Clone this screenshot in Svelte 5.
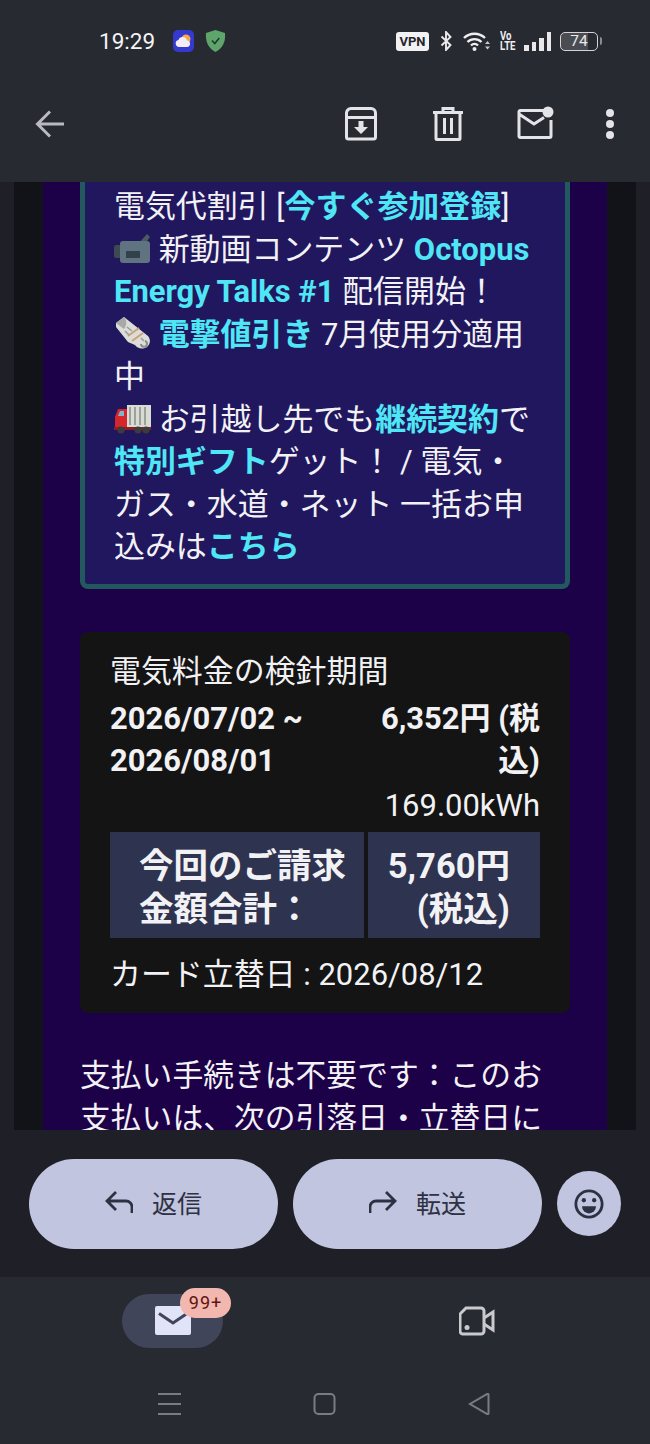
<script>
	const billRows = ['今回のご請求', '金額合計：'];
</script>

<div class="phone">
	<header class="top">
		<div class="status">
			<span class="time">19:29</span>
			<svg class="weather" viewBox="0 0 21 22">
				<rect width="21" height="22" rx="5" fill="#3539d0" />
				<circle cx="13" cy="9" r="4.500" fill="#f4a94e" />
				<path d="M6 17a3.500 3.500 0 0 1-.6-6.900A4.500 4.500 0 0 1 14 10.500a3.300 3.300 0 0 1 .5 6.500z" fill="#f1ecf6" />
			</svg>
			<svg class="shield" viewBox="0 0 21 22">
				<path d="M10.500 0 20 3c.8 9-2.500 15.500-9.500 19C3.500 18.500.2 12 1 3z" fill="#5ea56c" />
				<path d="m7 10.500 2.800 3 4.500-5.500" fill="none" stroke="#1f3a28" stroke-width="1.500" />
			</svg>
			<span class="spacer"></span>
			<span class="vpn">VPN</span>
			<svg class="bt" viewBox="0 0 14 20">
				<path d="M2 5.500 11 14l-4.500 5V1L11 6l-9 8.500" fill="none" stroke="#e9e9ec" stroke-width="1.900" />
			</svg>
			<svg class="wifi" viewBox="0 0 28 20">
				<path d="M1 7a15 15 0 0 1 21 0M4.500 11a10 10 0 0 1 14 0M8 14.500a5 5 0 0 1 7 0" fill="none" stroke="#eeeef0" stroke-width="2.400" />
				<circle cx="11.500" cy="18" r="2" fill="#eeeef0" />
				<path d="m22 13 2.500-3 2.500 3zM22 15.500l2.500 3 2.500-3z" fill="#c9c9cd" />
			</svg>
			<span class="volte"><b>Vo</b><b>LTE</b></span>
			<span class="signal"><i></i><i></i><i></i><i></i></span>
			<span class="battery"><span>74</span></span>
		</div>
		<div class="toolbar">
			<svg class="back" viewBox="0 0 30 28">
				<path d="M29 14H3M15 1.500 2.500 14 15 26.500" fill="none" stroke="#b9b9bf" stroke-width="3" />
			</svg>
			<span class="spacer"></span>
			<svg class="archive" viewBox="0 0 34 34">
				<path d="M2.500 10.500V30a2 2 0 0 0 2 2h25a2 2 0 0 0 2-2V10.500M2.500 10.500V6a4.500 4.500 0 0 1 4.500-4.500h20A4.500 4.500 0 0 1 31.500 6v4.500z" fill="none" stroke="#e3e3e8" stroke-width="3" />
				<path d="M14.500 14h5v6h4.500L17 27l-7-7h4.500z" fill="#e3e3e8" />
			</svg>
			<svg class="trash" viewBox="0 0 30 34">
				<path d="M0 5.500h30M10 5V1.500h10V5M3 6v25.500a1 1 0 0 0 1 1h22a1 1 0 0 0 1-1V6M11.500 11v16M18.500 11v16" fill="none" stroke="#e3e3e8" stroke-width="3" />
			</svg>
			<svg class="unread" viewBox="0 0 37 33">
				<path d="M27 4.500H3.500A1.500 1.500 0 0 0 2 6v24a1.500 1.500 0 0 0 1.500 1.500h29A1.500 1.500 0 0 0 34 30V14M2 8l15 10 10-6.500" fill="none" stroke="#e3e3e8" stroke-width="3" />
				<circle cx="31" cy="6" r="5.500" fill="#e3e3e8" />
			</svg>
			<span class="dots"><i></i><i></i><i></i></span>
		</div>
	</header>

	<main class="mail">
		<div class="gutter">
			<div class="sheet">
				<section class="notice">
					電気代割引 [<a href="#top">今すぐ参加登録</a>]<br />
					<svg class="emoji" viewBox="0 0 37 32">
						<path d="M24 12 33 2l3 3-6 8z" fill="#4d5a60" />
						<rect x="0" y="13" width="8" height="13" rx="2" fill="#3d4a50" />
						<rect x="6" y="9" width="30" height="22" rx="3" fill="#5f7480" />
						<rect x="12" y="19" width="14" height="7" fill="#33424a" />
					</svg>
					新動画コンテンツ <a href="#top">Octopus Energy Talks #1</a> 配信開始！<br />
					<svg class="emoji" viewBox="0 0 37 32">
						<path d="M2 6 10 0l24 19a7.500 7.500 0 0 1-3 12c-4 1.500-8 0-10-3L14 25 2 10z" fill="#dcdcd8" />
						<path d="M10 0c3 3 3 8 0 12L2 6z" fill="#a9a9a6" />
						<path d="m14 19 11-8M18 24l11-8" stroke="#c9a27c" stroke-width="2" />
						<path d="M13 10l5 4M11 14l4 4M27 21l3 3" stroke="#9b9b98" stroke-width="1.500" />
						<path d="M31 24a3 3 0 1 1-4 3" fill="none" stroke="#8d8d8a" stroke-width="2" />
					</svg>
					<a href="#top">電撃値引き</a> 7月使用分適用中<br />
					<svg class="emoji" viewBox="0 0 37 32">
						<rect x="13" y="3" width="24" height="22" fill="#d9dbd5" />
						<path d="M16 5v18M21 5v18M26 5v18M31 5v18" stroke="#9aa29a" stroke-width="2" />
						<path d="M1 15 4 7h9v19H1z" fill="#d7262b" />
						<path d="M4 14 6 9h4v5z" fill="#7fb4d0" />
						<rect x="0" y="25" width="37" height="3" fill="#8b1f22" />
						<circle cx="7" cy="28" r="3.500" fill="#3c3c3c" />
						<circle cx="24" cy="28" r="3.500" fill="#3c3c3c" />
						<circle cx="32" cy="28" r="3.500" fill="#3c3c3c" />
					</svg>
					お引越し先でも<a href="#top">継続契約</a>で<a href="#top">特別ギフト</a>ゲット！ / 電気・ガス・水道・ネット 一括お申込みは<a href="#top">こちら</a>
				</section>

				<section class="bill">
					<p class="label">電気料金の検針期間</p>
					<div class="period">
						<strong class="dates">2026/07/02 ~<br />2026/08/01</strong>
						<strong class="price">6,352円 (税込)</strong>
					</div>
					<p class="usage">169.00kWh</p>
					<div class="total">
						<div class="total-label">
							{#each billRows as row}<div>{row}</div>{/each}
						</div>
						<div class="total-amount">5,760円<br />(税込)</div>
					</div>
					<p class="card-date">カード立替日 : 2026/08/12</p>
				</section>

				<p class="after">支払い手続きは不要です：このお支払いは、次の引落日・立替日に</p>
			</div>
		</div>
	</main>

	<section class="actions">
		<button class="pill">
			<svg viewBox="0 0 28 24"><path d="M27 23v-6a6 6 0 0 0-6-6H3M11 2 2 11l9 9" fill="none" stroke="#2e3142" stroke-width="2.800" /></svg>
			返信
		</button>
		<button class="pill">
			<svg viewBox="0 0 28 24"><path d="M1 23v-6a6 6 0 0 1 6-6h18M17 2l9 9-9 9" fill="none" stroke="#2e3142" stroke-width="2.800" /></svg>
			転送
		</button>
		<button class="smile" aria-label="リアクション">
			<svg viewBox="0 0 32 32">
				<circle cx="16" cy="16" r="14" fill="none" stroke="#2e3142" stroke-width="3" />
				<circle cx="10.500" cy="12" r="2.300" fill="#2e3142" />
				<circle cx="21.500" cy="12" r="2.300" fill="#2e3142" />
				<path d="M8.500 18.500h15a7.500 7.500 0 0 1-15 0z" fill="#2e3142" />
			</svg>
		</button>
	</section>

	<nav class="tabs">
		<div class="tab">
			<div class="tab-active">
				<svg class="tab-mail" viewBox="0 0 36 30">
					<rect width="36" height="29" rx="2" fill="#e1e3f8" />
					<path d="M4 7.500 18 17 32 7.500" fill="none" stroke="#40455a" stroke-width="3" />
				</svg>
				<span class="badge">99+</span>
			</div>
		</div>
		<div class="tab">
			<svg class="tab-video" viewBox="0 0 36 30">
				<path d="M7 2h15a3 3 0 0 1 3 3v20a3 3 0 0 1-3 3H4a3 3 0 0 1-3-3V8z" fill="none" stroke="#c9c9ce" stroke-width="3" />
				<path d="m25 12 9-6v18l-9-6" fill="none" stroke="#c9c9ce" stroke-width="3" />
				<circle cx="8" cy="21.500" r="2.500" fill="#c9c9ce" />
			</svg>
		</div>
	</nav>

	<footer class="sysnav">
		<svg class="menu" viewBox="0 0 23 22"><path d="M0 1h23M0 11h23M0 21h23" stroke="#7b7c82" stroke-width="2" /></svg>
		<svg class="home" viewBox="0 0 22 22"><rect x="1" y="1" width="20" height="20" rx="4" fill="none" stroke="#7b7c82" stroke-width="2" /></svg>
		<svg class="tri" viewBox="0 0 22 22"><path d="M20 1.500v19a.8.8 0 0 1-1.200.6L1.500 11 18.800.9a.8.8 0 0 1 1.200.6z" fill="none" stroke="#7b7c82" stroke-width="2" /></svg>
	</footer>
</div>

<style>
	:global(body) {
		margin: 0;
		background: #282a31;
	}
	.phone {
		width: 650px;
		height: 1444px;
		display: flex;
		flex-direction: column;
		overflow: hidden;
		background: #282a31;
		font-family: Roboto, 'Noto Sans CJK JP', sans-serif;
		color: #fff;
	}
	svg {
		display: block;
		flex: none;
	}
	.spacer {
		flex: 1;
	}

	/* status bar + toolbar */
	.top {
		height: 182px;
		flex: none;
	}
	.status {
		height: 82px;
		display: flex;
		align-items: center;
		padding: 0 52px 0 99px;
		box-sizing: border-box;
	}
	.time {
		font-size: 22.500px;
		color: #f4f4f6;
		width: 74px;
	}
	.weather {
		width: 21px;
		height: 22px;
		margin-right: 11px;
	}
	.shield {
		width: 21px;
		height: 22px;
	}
	.vpn {
		width: 33px;
		height: 19px;
		border-radius: 3px;
		background: #f2f2f4;
		color: #24262c;
		font-size: 13px;
		font-weight: 700;
		line-height: 19px;
		text-align: center;
		margin-right: 10px;
	}
	.bt {
		width: 15px;
		height: 20px;
		margin-right: 9px;
	}
	.wifi {
		width: 28px;
		height: 20px;
		margin-right: 9px;
	}
	.volte {
		width: 15px;
		display: flex;
		flex-direction: column;
		margin-right: 9px;
	}
	.volte b {
		font-size: 12px;
		line-height: 10.500px;
		color: #eeeef0;
		transform: scaleX(0.8);
		transform-origin: left;
		white-space: nowrap;
	}
	.signal {
		display: flex;
		align-items: flex-end;
		gap: 3px;
		height: 19px;
		margin-right: 9px;
	}
	.signal i {
		width: 4.500px;
		background: #e8e8ea;
		height: 6px;
	}
	.signal i:nth-child(2) {
		height: 9px;
	}
	.signal i:nth-child(3) {
		height: 13px;
	}
	.signal i:nth-child(4) {
		height: 19px;
	}
	.battery {
		width: 38px;
		height: 19px;
		box-sizing: border-box;
		border: 1.500px solid #d4d4d8;
		border-radius: 5px;
		background: linear-gradient(90deg, #4a4c52 74%, transparent 74%);
		font-size: 15.500px;
		line-height: 16px;
		text-align: center;
		color: #e8e8ea;
		position: relative;
	}
	.battery::after {
		content: '';
		position: absolute;
		right: -5px;
		top: 4px;
		width: 2px;
		height: 8px;
		border-radius: 0 2px 2px 0;
		background: #8b8c90;
	}
	.toolbar {
		height: 84px;
		display: flex;
		align-items: center;
		padding: 0 36px 0 35px;
	}
	.back {
		width: 30px;
		height: 28px;
	}
	.archive {
		width: 34px;
		height: 34px;
		margin-right: 55px;
		margin-left: -1px;
	}
	.trash {
		width: 30px;
		height: 34px;
		margin-right: 54px;
	}
	.unread {
		width: 37px;
		height: 33px;
		margin-top: -3px;
		margin-right: 52px;
	}
	.dots {
		width: 8px;
		display: flex;
		flex-direction: column;
		gap: 3px;
	}
	.dots i {
		width: 8px;
		height: 8px;
		border-radius: 50%;
		background: #e3e3e8;
	}

	/* mail body, scrolled part way */
	.mail {
		height: 948px;
		flex: none;
		padding: 0 14px;
		background: #1f2027;
		overflow: hidden;
	}
	.gutter {
		height: 100%;
		padding: 0 29px;
		background: #121318;
	}
	.sheet {
		height: 100%;
		background: #1c0048;
		padding: 0 37px;
		overflow: hidden;
	}
	.notice {
		background: #21175e;
		border: 5px solid #22595f;
		border-top: 0;
		border-radius: 0 0 8px 8px;
		padding: 4px 29px 15px;
		font-size: 30.950px;
		line-height: 42.500px;
		color: #f2f2f5;
	}
	.notice a {
		color: #4fe6f5;
		font-weight: 700;
		text-decoration: none;
	}
	.emoji {
		display: inline-block;
		width: 37px;
		height: 32px;
		vertical-align: -4px;
	}
	.bill {
		margin-top: 43px;
		background: #141414;
		border-radius: 8px;
		padding: 19px 30px 17px;
		font-size: 30.950px;
		line-height: 42px;
		color: #f2f2f5;
	}
	.bill p {
		margin: 0;
	}
	.period {
		display: grid;
		grid-template-columns: 1fr 165px;
		margin-top: 5px;
	}
	.dates,
	.price {
		font-weight: 700;
	}
	.price,
	.usage {
		text-align: right;
	}
	.bill .usage {
		margin-top: 3px;
	}
	.total {
		display: grid;
		grid-template-columns: 254px 172px;
		gap: 4px;
		height: 106px;
		font-size: 34.500px;
		font-weight: 700;
		line-height: 43px;
		margin: 5px 0 16px;
	}
	.total-label,
	.total-amount {
		background: #2e3350;
		padding-top: 13px;
	}
	.total-label {
		padding-left: 29px;
	}
	.total-amount {
		text-align: right;
		padding-right: 30px;
	}
	.sheet .after {
		margin: 41px 0 0;
		font-size: 30.800px;
		line-height: 43px;
		color: #f2f2f5;
	}

	/* reply actions */
	.actions {
		height: 147px;
		flex: none;
		background: #1f2027;
		display: flex;
		align-items: center;
		gap: 15px;
		padding: 0 29px;
		box-sizing: border-box;
	}
	.pill {
		width: 249px;
		height: 90px;
		border: 0;
		border-radius: 45px;
		background: #c1c5e0;
		color: #2e3142;
		display: flex;
		align-items: center;
		justify-content: center;
		gap: 19px;
		font: 25px Roboto, 'Noto Sans CJK JP', sans-serif;
		padding: 0 0 3px;
	}
	.pill svg {
		width: 28px;
		height: 24px;
	}
	.smile {
		width: 64px;
		height: 65px;
		border: 0;
		border-radius: 50%;
		background: #c1c5e0;
		display: grid;
		place-items: center;
		padding: 0;
	}
	.smile svg {
		width: 30px;
		height: 30px;
	}

	/* bottom tabs */
	.tabs {
		height: 90px;
		flex: none;
		display: grid;
		grid-template-columns: 345px 1fr;
	}
	.tab {
		display: flex;
		justify-content: center;
		padding-top: 17px;
	}
	.tab:last-child {
		justify-content: flex-start;
		padding: 29px 0 0 114px;
	}
	.tab-active {
		width: 101px;
		height: 54px;
		border-radius: 27px;
		background: #40455a;
		display: grid;
		place-items: center;
		position: relative;
	}
	.tab-mail {
		width: 36px;
		height: 30px;
	}
	.tab-video {
		width: 36px;
		height: 30px;
	}
	.badge {
		position: absolute;
		left: 58px;
		top: -6px;
		width: 51px;
		height: 30px;
		border-radius: 15px;
		background: #f2b8b0;
		color: #601410;
		font-size: 18px;
		line-height: 30px;
		letter-spacing: 1px;
		text-align: center;
	}

	/* system navigation */
	.sysnav {
		flex: 1;
		display: grid;
		grid-template-columns: repeat(3, 155px);
		justify-content: center;
		padding: 26px 1px 0 0;
		justify-items: center;
		align-items: start;
	}
	.menu,
	.home,
	.tri {
		width: 23px;
		height: 22px;
	}
</style>
